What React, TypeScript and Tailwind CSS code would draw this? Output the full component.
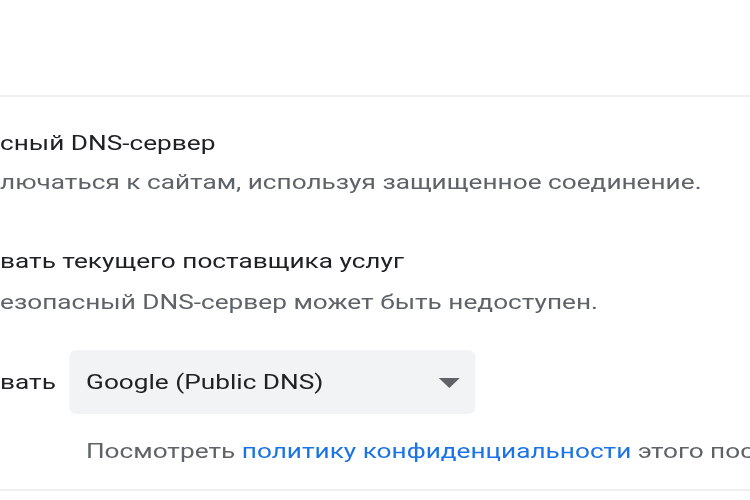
export default function App() {
  return (
    <div className="w-[750px] h-[500px] overflow-hidden bg-white font-['Roboto','Liberation_Sans',sans-serif] text-[20px] leading-[30px]">
      {/* the capture is stretched horizontally, so the page is drawn narrow and widened */}
      <div className="w-[573px] origin-left scale-x-[1.31]">
        <div className="h-[97px] border-b-2 border-[#efefef]" />

        {/* Secure DNS toggle */}
        <div className="pt-[31px]">
          <div className="whitespace-nowrap text-[#202124]">сный DNS-сервер</div>
          <div className="mt-[9px] whitespace-nowrap text-[#5f6368]">
            лючаться к сайтам, используя защищенное соединение.
          </div>
        </div>

        {/* Current provider option */}
        <div className="mt-[49px]">
          <div className="whitespace-nowrap text-[#202124]">вать текущего поставщика услуг</div>
          <div className="mt-[11px] whitespace-nowrap text-[#5f6368]">
            езопасный DNS-сервер может быть недоступен.
          </div>
        </div>

        {/* Custom provider option */}
        <div className="mt-[33px] flex items-center">
          <span className="w-[52.7px] shrink-0 whitespace-nowrap text-[#202124]">вать</span>
          <div className="flex h-[64px] w-[310.7px] items-center justify-between rounded-[6px] bg-[#f1f3f4] pl-[13px] pr-[12px] text-[#202124]">
            <span>Google (Public DNS)</span>
            <svg width="16" height="10" viewBox="0 0 16 10" className="mt-[2px] text-[#5f6368]">
              <path d="M0 0 L16 0 L8 10 Z" fill="currentColor" />
            </svg>
          </div>
        </div>

        <div className="mt-[22px] whitespace-nowrap pl-[65.6px] text-[#5f6368]">
          Посмотреть <span className="text-[#1a73e8]">политику конфиденциальности</span> этого поставщика
        </div>

        <div className="mt-[23px] border-b-2 border-[#efefef]" />
      </div>
    </div>
  );
}
